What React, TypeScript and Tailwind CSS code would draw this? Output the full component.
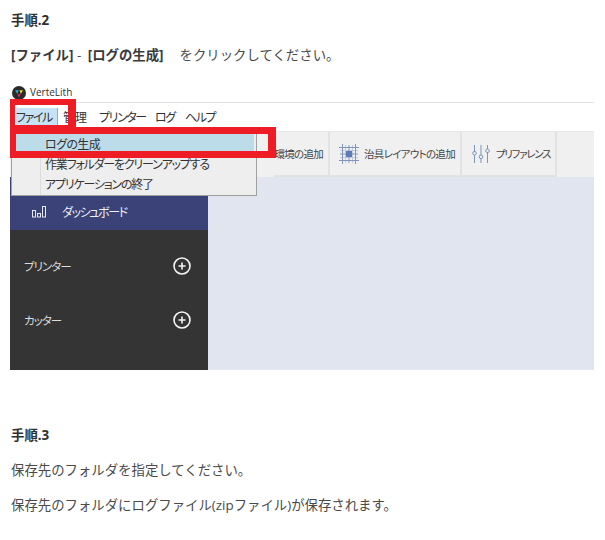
import React from "react";

const JP = "font-['Open_Sans','Noto_Sans_CJK_JP',sans-serif]";
const APP = "font-['Noto_Sans_CJK_JP',sans-serif] [font-feature-settings:'palt']";

function Logo() {
  return (
    <svg width="14" height="14" viewBox="0 0 14 14" className="shrink-0">
      <circle cx="7" cy="7" r="7" fill="#2b2b2b" />
      <path d="M3 4.2h3.6L5.4 8z" fill="#19b5d8" />
      <path d="M7.4 4.2H11L8.9 8z" fill="#f2d21f" />
      <path d="M5.3 8.2h3.4L7 11.5z" fill="#e5207f" />
    </svg>
  );
}

function Plus() {
  return (
    <svg width="18" height="18" viewBox="0 0 18 18" fill="none" stroke="#f4f4f4">
      <circle cx="9" cy="9" r="8" strokeWidth="1.6" />
      <path d="M5.5 9h7M9 5.5v7" strokeWidth="1.6" />
    </svg>
  );
}

function Bars() {
  return (
    <svg width="14" height="12" viewBox="0 0 14 12" fill="none" stroke="#e8e8f0" strokeWidth="1">
      <rect x="0.5" y="4.5" width="3" height="6.5" />
      <rect x="5.5" y="7.5" width="3" height="3.5" />
      <rect x="10.5" y="0.5" width="3" height="10.5" />
    </svg>
  );
}

function Grid() {
  return (
    <svg width="20" height="20" viewBox="0 0 20 20" fill="none" strokeWidth="1" className="shrink-0">
      <path d="M6.5 1v18M13.5 1v18M1 6.5h18M1 13.5h18" stroke="#c0cbe0" />
      <path d="M3.5 0v20M10 1v18M16.5 0v20M0 3.5h20M1 10h18M0 16.5h20" stroke="#8296bd" />
      <rect x="7" y="7" width="6" height="6" fill="#5d7cb5" />
    </svg>
  );
}

function Sliders() {
  return (
    <svg width="18" height="18" viewBox="0 0 18 18" fill="none" stroke="#7d93ba" strokeWidth="1" className="shrink-0">
      <path d="M2.5 0v6.5M2.5 10v8M9 0v10M9 13.5V18M15.5 0v4M15.5 7.5V18" />
      <circle cx="2.5" cy="8.2" r="1.8" />
      <circle cx="9" cy="11.8" r="1.8" />
      <circle cx="15.5" cy="5.8" r="1.8" />
    </svg>
  );
}

export default function App() {
  return (
    <div className={`w-[605px] h-[540px] bg-white overflow-hidden text-[13.4px] text-[#4a4a4a] ${JP}`}>
      <div className="h-[83px] pl-[11px] pt-[11px]">
        <p className="h-[18px] leading-[18px] font-bold text-[#2f2f2f]">手順.2</p>
        <p className="mt-[17px] h-[18px] leading-[18px] whitespace-nowrap">
          <b className="text-[#3a3a3a]">[ファイル]</b> - <b className="ml-[3px] text-[#3a3a3a]">[ログの生成]</b>
          <span className="ml-[16px]">をクリックしてください。</span>
        </p>
      </div>

      <div className={`relative ml-[10px] w-[584px] h-[287px] flex flex-col ${APP}`}>
        <div className="h-[19px] flex items-center gap-[4px] pl-[2px] text-[10px] text-[#333]">
          <Logo />
          <span className="font-['Open_Sans',sans-serif]">VerteLith</span>
        </div>
        <div className="h-[29px] border-t border-[#e4e4e4] flex items-center text-[12px] tracking-[-1.4px] text-[#333] pl-[6px] whitespace-nowrap">
          <span className="w-[42px] h-[18px] leading-[18px] bg-[#c5e3f5] border-r border-[#7db8dc]">ファイル</span>
          <span className="ml-[5px] w-[28px] tracking-normal">管理</span>
          <span className="ml-[8px] w-[46px]">プリンター</span>
          <span className="ml-[10px] w-[19px]">ログ</span>
          <span className="ml-[11px]">ヘルプ</span>
        </div>
        <div className="h-[46px] bg-[#f0f0f0] border-t border-[#e8e8e8] flex justify-end text-[10.5px] tracking-[-0.7px] text-[#444] pr-[37px] whitespace-nowrap">
          <div className="h-[45px] border-r-2 border-b-2 border-[#e2e2e2] flex items-center pr-[5px]">環境の追加</div>
          <div className="w-[132px] h-[45px] border-r-2 border-b-2 border-[#e2e2e2] flex items-center gap-[5px] pl-[9px]">
            <Grid />
            治具レイアウトの追加
          </div>
          <div className="w-[95px] h-[45px] border-r-2 border-b-2 border-[#e2e2e2] flex items-center gap-[6px] pl-[10px] tracking-[-1.3px]">
            <Sliders />
            プリファレンス
          </div>
        </div>
        <div className="flex-1 flex min-h-0">
          <div className="w-[198px] bg-[#333433] flex flex-col text-[11.5px] tracking-[-1px] text-[#dcdcdc]">
            <div className="h-[53px] bg-[#3b4278] shrink-0 flex items-center pl-[22px] pt-[17px] gap-[16px] text-[#f0f0f5] text-[12px] tracking-[-1.4px]">
              <Bars />
              <span>ダッシュボード</span>
            </div>
            <div className="flex items-center justify-between h-[54px] mt-[9px] pl-[14px] pr-[17px]">
              <span className="pt-[1px]">プリンター</span>
              <Plus />
            </div>
            <div className="flex items-center justify-between h-[54px] pl-[14px] pr-[17px]">
              <span className="pt-[1px]">カッター</span>
              <Plus />
            </div>
          </div>
          <div className="flex-1 bg-[#e1e5ef]" />
        </div>

        <div className="absolute left-[1px] top-[49px] w-[246px] h-[64px] bg-[#eeeeee] border border-[#a0a0a0] text-[12px] tracking-[-1.2px] text-[#333] z-10 whitespace-nowrap">
          <div className="absolute left-[28px] top-0 bottom-0 w-px bg-[#dcdcdc]" />
          <div className="relative h-[20px] mt-[1px] mx-[2px] bg-[#bddcea] pl-[31px] leading-[20px] tracking-[-0.6px]">ログの生成</div>
          <div className="relative h-[20px] pl-[33px] leading-[20px]">作業フォルダーをクリーンアップする</div>
          <div className="relative h-[20px] pl-[33px] leading-[20px]">アプリケーションの終了</div>
        </div>

        <div className="absolute left-0 top-[16px] w-[66px] h-[28px] border-[#ee1c25] border-l-[5px] border-r-[8px] border-t-[6px] border-b-[2px] z-20" />
        <div className="absolute left-0 top-[44px] w-[266px] h-[31px] border-[#ee1c25] border-l-[6px] border-r-[8px] border-y-[7px] z-20" />
      </div>

      <div className="pl-[11px] pt-[56px]">
        <p className="h-[18px] leading-[18px] font-bold text-[#2f2f2f]">手順.3</p>
        <p className="mt-[17px] h-[18px] leading-[18px]">保存先のフォルダを指定してください。</p>
        <p className="mt-[17px] h-[18px] leading-[18px]">保存先のフォルダにログファイル(zipファイル)が保存されます。</p>
      </div>
    </div>
  );
}
